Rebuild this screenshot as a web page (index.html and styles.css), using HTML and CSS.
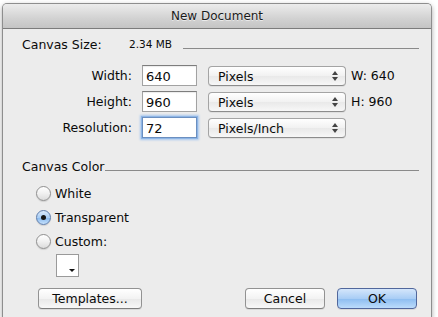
FILE: index.html
```html
<!DOCTYPE html>
<html lang="en">
<head>
    <meta charset="UTF-8">
    <title>New Document</title>
    <link rel="stylesheet" href="styles.css">
</head>
<body>

    <div class="window">
        <div class="titlebar">New Document</div>

        <div class="content">
            <!-- Dimensione del documento -->
            <div class="size-row">
                <span class="size-label">Canvas Size:</span>
                <span class="size-value">2.34 MB</span>
                <span class="rule"></span>
            </div>

            <div class="fields">
                <div class="field-row">
                    <label class="field-label">Width:</label>
                    <input class="num" type="text" value="640">
                    <div class="select">Pixels<span class="arrows"></span></div>
                    <span class="dim">W: 640</span>
                </div>
                <div class="field-row">
                    <label class="field-label">Height:</label>
                    <input class="num" type="text" value="960">
                    <div class="select">Pixels<span class="arrows"></span></div>
                    <span class="dim">H: 960</span>
                </div>
                <div class="field-row">
                    <label class="field-label">Resolution:</label>
                    <input class="num focused" type="text" value="72">
                    <div class="select">Pixels/Inch<span class="arrows"></span></div>
                </div>
            </div>

            <!-- Colore di sfondo -->
            <div class="group-head">
                <span>Canvas Color</span>
                <span class="rule"></span>
            </div>

            <div class="radios">
                <div class="radio-row"><span class="radio"></span>White</div>
                <div class="radio-row"><span class="radio checked"></span>Transparent</div>
                <div class="radio-row"><span class="radio"></span>Custom:</div>
            </div>

            <div class="swatch"><span class="swatch-arrow"></span></div>

            <div class="buttons">
                <button class="btn templates">Templates...</button>
                <span class="spacer"></span>
                <button class="btn">Cancel</button>
                <button class="btn primary">OK</button>
            </div>
        </div>
    </div>

</body>
</html>
```

FILE: styles.css
```css
body {
    margin: 0;
    padding: 0;
    background-color: #ffffff;
    font-family: 'DejaVu Sans', sans-serif;
    font-size: 12.5px;
    color: #0a0a0a;
    overflow: hidden;
}
.window {
    margin: 3px 0 0 2px;
    width: 428px;
    height: 314px;
    background-color: #ececec;
    border: 1px solid #8e8e8e;
    border-bottom: none;
    border-radius: 5px 5px 0 0;
    box-shadow: 0 2px 5px rgba(0, 0, 0, 0.35);
}
.titlebar {
    height: 24px;
    line-height: 24px;
    text-align: center;
    font-size: 12px;
    color: #1a1a1a;
    text-shadow: 0 1px 0 rgba(255, 255, 255, 0.6);
    background: linear-gradient(#ececec, #d2d2d2 60%, #c4c4c4);
    border-bottom: 1px solid #7c7c7c;
    border-radius: 4px 4px 0 0;
}
.content {
    padding: 0 12px 0 19px;
}
.size-row {
    display: flex;
    align-items: center;
    height: 20px;
    margin-top: 5px;
}
.size-label {
    width: 107px;
}
.size-value {
    font-size: 10.5px;
}
.rule {
    flex: 1;
    height: 1px;
    margin-top: 8px;
    background-color: #8a8a8a;
}
.size-row .rule {
    margin-left: 11px;
}
.fields {
    margin-top: 11px;
    display: flex;
    flex-direction: column;
    gap: 5px;
}
.field-row {
    display: flex;
    align-items: center;
    height: 21px;
}
.field-label {
    width: 110px;
    text-align: right;
}
.num {
    box-sizing: border-box;
    width: 55px;
    height: 21px;
    margin: 0 0 0 10px;
    padding: 1px 3px 0;
    border: 1px solid #a2a2a2;
    border-top-color: #7d7d7d;
    background-color: #ffffff;
    font-family: inherit;
    font-size: 13px;
    color: #0a0a0a;
    outline: none;
    box-shadow: inset 0 1px 1px rgba(0, 0, 0, 0.08);
}
.num.focused {
    border-color: #6b8fc0;
    box-shadow: 0 0 0 1px #8fb6e6, 0 0 2px 2px #a9c8ee;
}
.select {
    position: relative;
    box-sizing: border-box;
    width: 138px;
    height: 20px;
    margin-left: 11px;
    padding: 2px 0 0 9px;
    border: 1px solid #a4a4a4;
    border-bottom-color: #8c8c8c;
    border-radius: 4px;
    background: linear-gradient(#ffffff, #f1f1f1 50%, #e9e9e9 51%, #f7f7f7);
    box-shadow: 0 1px 0 rgba(0, 0, 0, 0.06);
}
/* freccette su/giu del menu */
.arrows::before, .arrows::after {
    content: '';
    position: absolute;
    right: 7px;
    border-left: 3px solid transparent;
    border-right: 3px solid transparent;
}
.arrows::before {
    top: 4px;
    border-bottom: 4px solid #444;
}
.arrows::after {
    top: 10px;
    border-top: 4px solid #444;
}
.dim {
    margin-left: 5px;
}
.group-head {
    display: flex;
    align-items: center;
    height: 20px;
    margin-top: 18px;
}
.radios {
    margin-top: 5px;
    margin-left: 14px;
}
.radio-row {
    display: flex;
    align-items: center;
    height: 24px;
}
.radio {
    position: relative;
    box-sizing: border-box;
    width: 15px;
    height: 15px;
    margin-right: 4px;
    border: 1px solid #8f8f8f;
    border-radius: 50%;
    background: linear-gradient(#ffffff, #f0f0f0 50%, #dcdcdc);
    box-shadow: 0 1px 1px rgba(0, 0, 0, 0.12);
}
.radio.checked {
    border-color: #5d7cab;
    background: linear-gradient(#dbeafb, #a9cdf4 50%, #86b8ee 51%, #c5e0fb);
}
.radio.checked::after {
    content: '';
    position: absolute;
    left: 4px;
    top: 4px;
    width: 5px;
    height: 5px;
    border-radius: 50%;
    background-color: #151515;
}
.swatch {
    position: relative;
    box-sizing: border-box;
    width: 23px;
    height: 23px;
    margin: 1px 0 0 34px;
    border: 1px solid #9a9a9a;
    background-color: #ffffff;
}
.swatch-arrow {
    position: absolute;
    right: 3px;
    bottom: 4px;
    border-left: 3px solid transparent;
    border-right: 3px solid transparent;
    border-top: 3px solid #111;
}
.buttons {
    display: flex;
    margin-top: 11px;
    margin-right: 2px;
}
.spacer {
    flex: 1;
}
.btn {
    box-sizing: border-box;
    width: 80px;
    height: 21px;
    margin-left: 12px;
    padding: 0;
    font-family: inherit;
    font-size: 12.5px;
    color: #0a0a0a;
    border: 1px solid #929292;
    border-bottom-color: #7e7e7e;
    border-radius: 4px;
    background: linear-gradient(#ffffff, #f3f3f3 50%, #e8e8e8 51%, #f8f8f8);
    box-shadow: 0 1px 0 rgba(0, 0, 0, 0.08);
}
.btn.templates {
    width: 104px;
    margin-left: 16px;
}
.btn.primary {
    border-color: #51679c;
    background: linear-gradient(#d4e6fb, #a9cdf5 50%, #8cbcf0 51%, #bcdcfb);
}
```
